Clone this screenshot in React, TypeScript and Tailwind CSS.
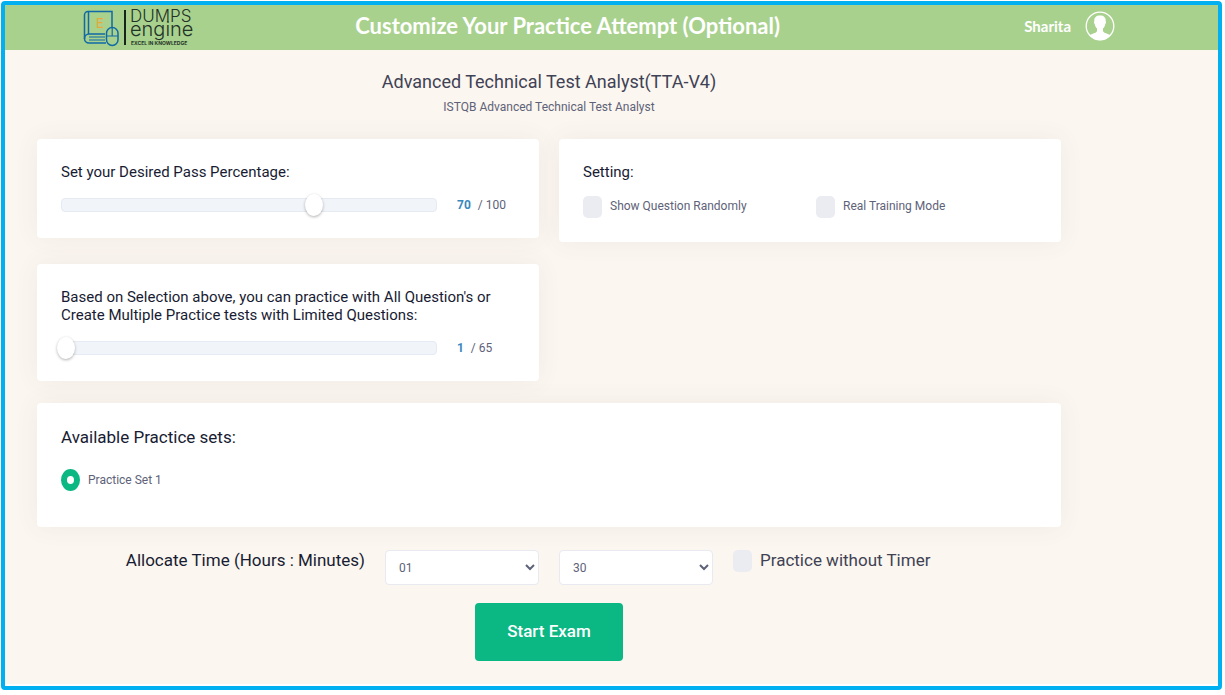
import React, { useState } from "react";

// Site logo: book with a mouse, divider and wordmark
const Logo = () => (
  <svg
    width="116"
    height="44"
    viewBox="0 -3 116 44"
    role="img"
    aria-label="Dumps Engine"
    className="overflow-visible"
  >
    <g fill="none" stroke="#0f6aa6" strokeWidth="1.5">
      <path d="M22 25H6a4.500 4.500 0 0 0 0 9h17" />
      <path d="M29 18V2.500H5a3.500 3.500 0 0 0-3.500 3.500v24" />
      <path d="M5.500 2.500V25" />
      <path d="M6 28h16M6 31h16" strokeWidth="1.2" />
      <rect x="23.500" y="18.500" width="11.500" height="18" rx="5.700" />
      <path d="M23.500 27H35M29.200 18.500V27" strokeWidth="1.2" />
    </g>
    <text x="13" y="19" fontSize="13" fill="#e5aa3c" className="font-[Inter] font-medium">
      E
    </text>
    <rect x="41" y="1" width="2" height="35" fill="#16261a" />
    <g fill="#1f3327">
      <text x="47" y="13" fontSize="17" className="font-[Inter] font-light">
        DUMPS
      </text>
      <text x="47" y="27" fontSize="20" className="font-[Inter] font-light">
        engine
      </text>
      <text x="48" y="36" fontSize="5" className="font-[Inter] font-bold">
        EXCEL IN KNOWLEDGE
      </text>
    </g>
  </svg>
);

const Avatar = () => (
  <svg width="30" height="30" viewBox="0 0 30 30" aria-hidden="true">
    <circle cx="15" cy="15" r="13.800" fill="none" stroke="#fff" strokeWidth="1.300" />
    <path
      fill="#fff"
      d="M15 4.500c-4.200 0-6 2.400-5.700 5.900-.6.200-.4 2 .4 2.600.4 2.200 1.300 3.600 2.300 4.600v2.600c-.8 1.800-5 2.400-7.500 4.100a13.600 13.600 0 0 0 21 0c-2.500-1.700-6.700-2.300-7.500-4.100v-2.600c1-1 1.900-2.400 2.300-4.600.8-.6 1-2.400.4-2.600C21 6.900 19.200 4.500 15 4.500z"
    />
  </svg>
);

const Card = ({
  className = "",
  children,
}: {
  className?: string;
  children: React.ReactNode;
}) => (
  <section
    className={`rounded bg-white px-6 shadow-[0_0_24px_rgba(120,80,90,0.07)] ${className}`}
  >
    {children}
  </section>
);

// Slider with the current value and the maximum beside it
const RangeRow = ({
  id,
  min,
  max,
  value,
  onChange,
}: {
  id: string;
  min: number;
  max: number;
  value: number;
  onChange: (value: number) => void;
}) => (
  <div className="flex h-6 items-center">
    <div className="flex h-[14px] flex-1 items-center rounded border border-[#e6eaf2] bg-[#f1f5f9]">
      <input
        id={id}
        type="range"
        min={min}
        max={max}
        value={value}
        onChange={(e) => onChange(Number(e.target.value))}
        className="-ml-[5px] h-6 w-full cursor-pointer appearance-none bg-transparent [&::-webkit-slider-thumb]:h-[22px] [&::-webkit-slider-thumb]:w-[18px] [&::-webkit-slider-thumb]:appearance-none [&::-webkit-slider-thumb]:rounded-[50%] [&::-webkit-slider-thumb]:bg-white [&::-webkit-slider-thumb]:shadow-[0_1px_3px_rgba(0,0,0,0.3)]"
      />
    </div>
    <output htmlFor={id} className="w-[78px] pl-5 text-xs text-[#5e6278]">
      <b className="mr-1 text-[#3a87bd]">{value}</b> / {max}
    </output>
  </div>
);

const CheckOption = ({
  label,
  large = false,
}: {
  label: string;
  large?: boolean;
}) => (
  <label
    className={`flex items-start gap-2 ${
      large
        ? "text-[17px] leading-5 text-[#3f4254]"
        : "text-xs leading-5 text-[#5e6278]"
    }`}
  >
    <input
      type="checkbox"
      className="h-[22px] w-[19px] shrink-0 appearance-none rounded-[5px] bg-[#ebecf2] checked:bg-[#0bb783]"
    />
    {label}
  </label>
);

const TimeSelect = ({
  label,
  options,
  initial,
}: {
  label: string;
  options: string[];
  initial: string;
}) => {
  const [value, setValue] = useState(initial);
  return (
    <select
      aria-label={label}
      value={value}
      onChange={(e) => setValue(e.target.value)}
      className="h-[35px] w-full rounded border border-[#e8e9f1] bg-white pl-[9px] text-xs text-[#5e6278]"
    >
      {options.map((option) => (
        <option key={option}>{option}</option>
      ))}
    </select>
  );
};

const hours = ["00", "01", "02", "03", "04"];
const minutes = ["00", "15", "30", "45"];

export default function App() {
  const [passMark, setPassMark] = useState(70);
  const [questions, setQuestions] = useState(1);

  return (
    <div className="min-h-screen bg-white pt-px pr-[3px] pb-[5px] pl-px font-[Roboto,sans-serif]">
      <div className="flex min-h-[689px] flex-col rounded-sm border-4 border-[#00b0f0] bg-white pb-[2px]">
        <header className="flex h-[45px] items-center bg-[#a9d18e] pr-[103px] pl-[78px] font-[Lato,sans-serif] font-bold text-white">
          <Logo />
          <h1 className="flex-1 pr-[88px] pb-[3px] text-center text-[22px] leading-8">
            Customize Your Practice Attempt (Optional)
          </h1>
          <div className="flex items-center gap-[14px] pb-[3px] text-[15px]">
            <span>Sharita</span>
            <Avatar />
          </div>
        </header>

        <main className="flex-1 bg-[#fbf6f0] pr-[157px] pl-8">
          <div className="pt-5 pb-6 text-center">
            <h2 className="text-lg leading-6 text-[#3f4254]">
              Advanced Technical Test Analyst(TTA-V4)
            </h2>
            <p className="pt-[5px] text-xs leading-4 text-[#5e6278]">
              ISTQB Advanced Technical Test Analyst
            </p>
          </div>

          <div className="grid grid-cols-2 items-start gap-x-5 gap-y-[22px]">
            <Card className="pt-6 pb-[21px]">
              <label
                htmlFor="pass-mark"
                className="mb-3 block text-[15px] leading-[18px] text-[#181c32]"
              >
                Set your Desired Pass Percentage:
              </label>
              <RangeRow
                id="pass-mark"
                min={1}
                max={100}
                value={passMark}
                onChange={setPassMark}
              />
            </Card>

            <Card className="pt-6 pb-6">
              <h3 className="mb-[15px] text-[15px] leading-[18px] text-[#181c32]">
                Setting:
              </h3>
              <div className="grid grid-cols-2 gap-x-3">
                <CheckOption label="Show Question Randomly" />
                <CheckOption label="Real Training Mode" />
              </div>
            </Card>

            <Card className="pt-6 pb-[21px]">
              <label
                htmlFor="questions"
                className="mb-3 block text-[15px] leading-[18px] text-[#181c32]"
              >
                Based on Selection above, you can practice with All Question's
                or Create Multiple Practice tests with Limited Questions:
              </label>
              <RangeRow
                id="questions"
                min={1}
                max={65}
                value={questions}
                onChange={setQuestions}
              />
            </Card>
          </div>

          <Card className="mt-[22px] pt-6 pb-9">
            <h3 className="mb-[22px] text-[17px] leading-5 text-[#181c32]">
              Available Practice sets:
            </h3>
            <label className="flex items-center gap-2 text-xs leading-5 text-[#5e6278]">
              <input
                type="radio"
                name="practice-set"
                defaultChecked
                className="h-[22px] w-[19px] appearance-none rounded-[50%] border-x-[6px] border-y-[7px] border-[#0bb783] bg-white"
              />
              Practice Set 1
            </label>
          </Card>

          <div className="mt-[23px] grid grid-cols-6 items-start gap-5">
            <p className="col-span-2 text-right text-[17px] leading-5 text-[#181c32]">
              Allocate Time (Hours : Minutes)
            </p>
            <TimeSelect label="Hours" options={hours} initial="01" />
            <TimeSelect label="Minutes" options={minutes} initial="30" />
            <div className="col-span-2">
              <CheckOption label="Practice without Timer" large />
            </div>
          </div>

          <div className="mt-[18px] pb-[23px] text-center">
            <button
              type="button"
              className="h-[58px] rounded bg-[#0bb783] px-8 text-[17px] font-medium text-white"
            >
              Start Exam
            </button>
          </div>
        </main>
      </div>
    </div>
  );
}
